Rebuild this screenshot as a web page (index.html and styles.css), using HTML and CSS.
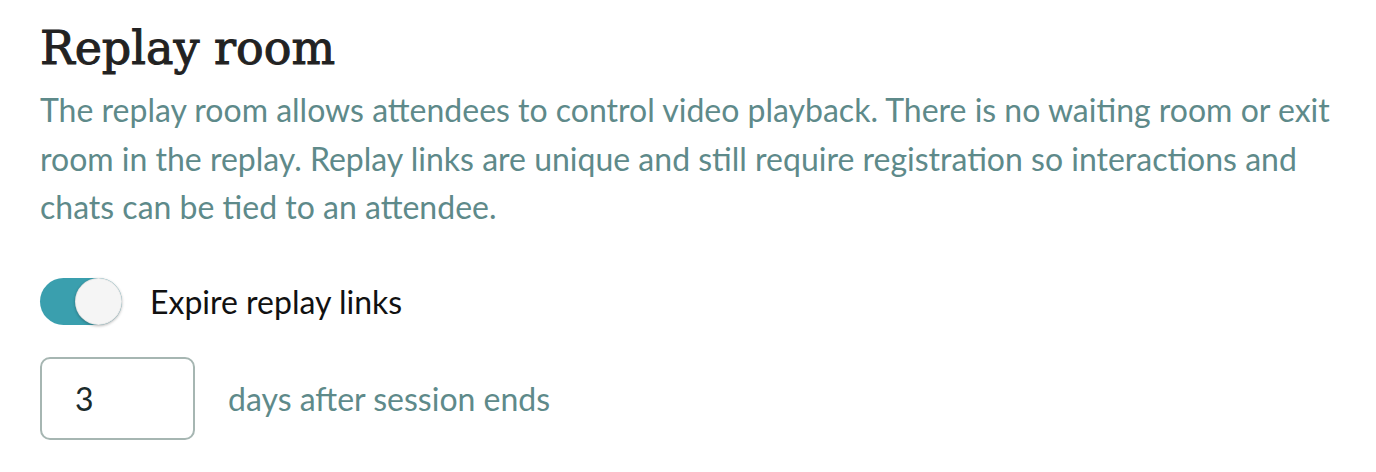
FILE: index.html
```
<!DOCTYPE html>
<html>
<head>
<meta charset="utf-8">
<link rel="stylesheet" href="styles.css">
</head>
<body>
<section class="panel">
  <h1 class="title">Replay room</h1>
  <p class="desc">The replay room allows attendees to control video playback. There is no waiting room or exit room in the replay. Replay links are unique and still require registration so interactions and chats can be tied to an attendee.</p>
  <div class="toggle-row">
    <span class="toggle"><span class="knob"></span></span>
    <span class="toggle-label">Expire replay links</span>
  </div>
  <div class="days-row">
    <div class="days-input">3</div>
    <span class="days-label">days after session ends</span>
  </div>
</section>
</body>
</html>
```
FILE: styles.css
```
html, body {
  margin: 0;
  padding: 0;
  background: #ffffff;
}
.panel {
  padding: 20px 0 0 40px;
  width: 1310px;
  display: flex;
  flex-direction: column;
}
.title {
  margin: 0;
  font-family: "DejaVu Serif", serif;
  font-weight: 400;
  font-size: 46px;
  line-height: 56px;
  color: #222222;
  -webkit-text-stroke: 1px #222222;
}
.desc {
  margin: 10px 0 0 0;
  font-family: "Lato", sans-serif;
  font-size: 32px;
  line-height: 48.5px;
  color: #5e8a8a;
}
.toggle-row {
  margin-top: 46px;
  display: flex;
  align-items: center;
  gap: 28px;
}
.toggle {
  width: 82px;
  height: 47px;
  border-radius: 24px;
  background: #3a9fae;
  display: flex;
  justify-content: flex-end;
}
.knob {
  width: 47px;
  height: 47px;
  border-radius: 50%;
  background: #f5f5f5;
  box-shadow: 0 1px 3px rgba(0,0,0,0.3), inset 0 0 0 1px rgba(0,0,0,0.06);
}
.toggle-label {
  font-family: "Lato", sans-serif;
  font-size: 32px;
  color: #111111;
}
.days-row {
  margin-top: 32px;
  display: flex;
  align-items: center;
  gap: 33px;
}
.days-input {
  box-sizing: border-box;
  width: 155px;
  height: 83px;
  border: 2px solid #a6b6b2;
  border-radius: 10px;
  padding-left: 33px;
  display: flex;
  align-items: center;
  font-family: "Lato", sans-serif;
  font-size: 32px;
  color: #1b2b2b;
}
.days-label {
  font-family: "Lato", sans-serif;
  font-size: 32px;
  color: #5e8a8a;
}
```
